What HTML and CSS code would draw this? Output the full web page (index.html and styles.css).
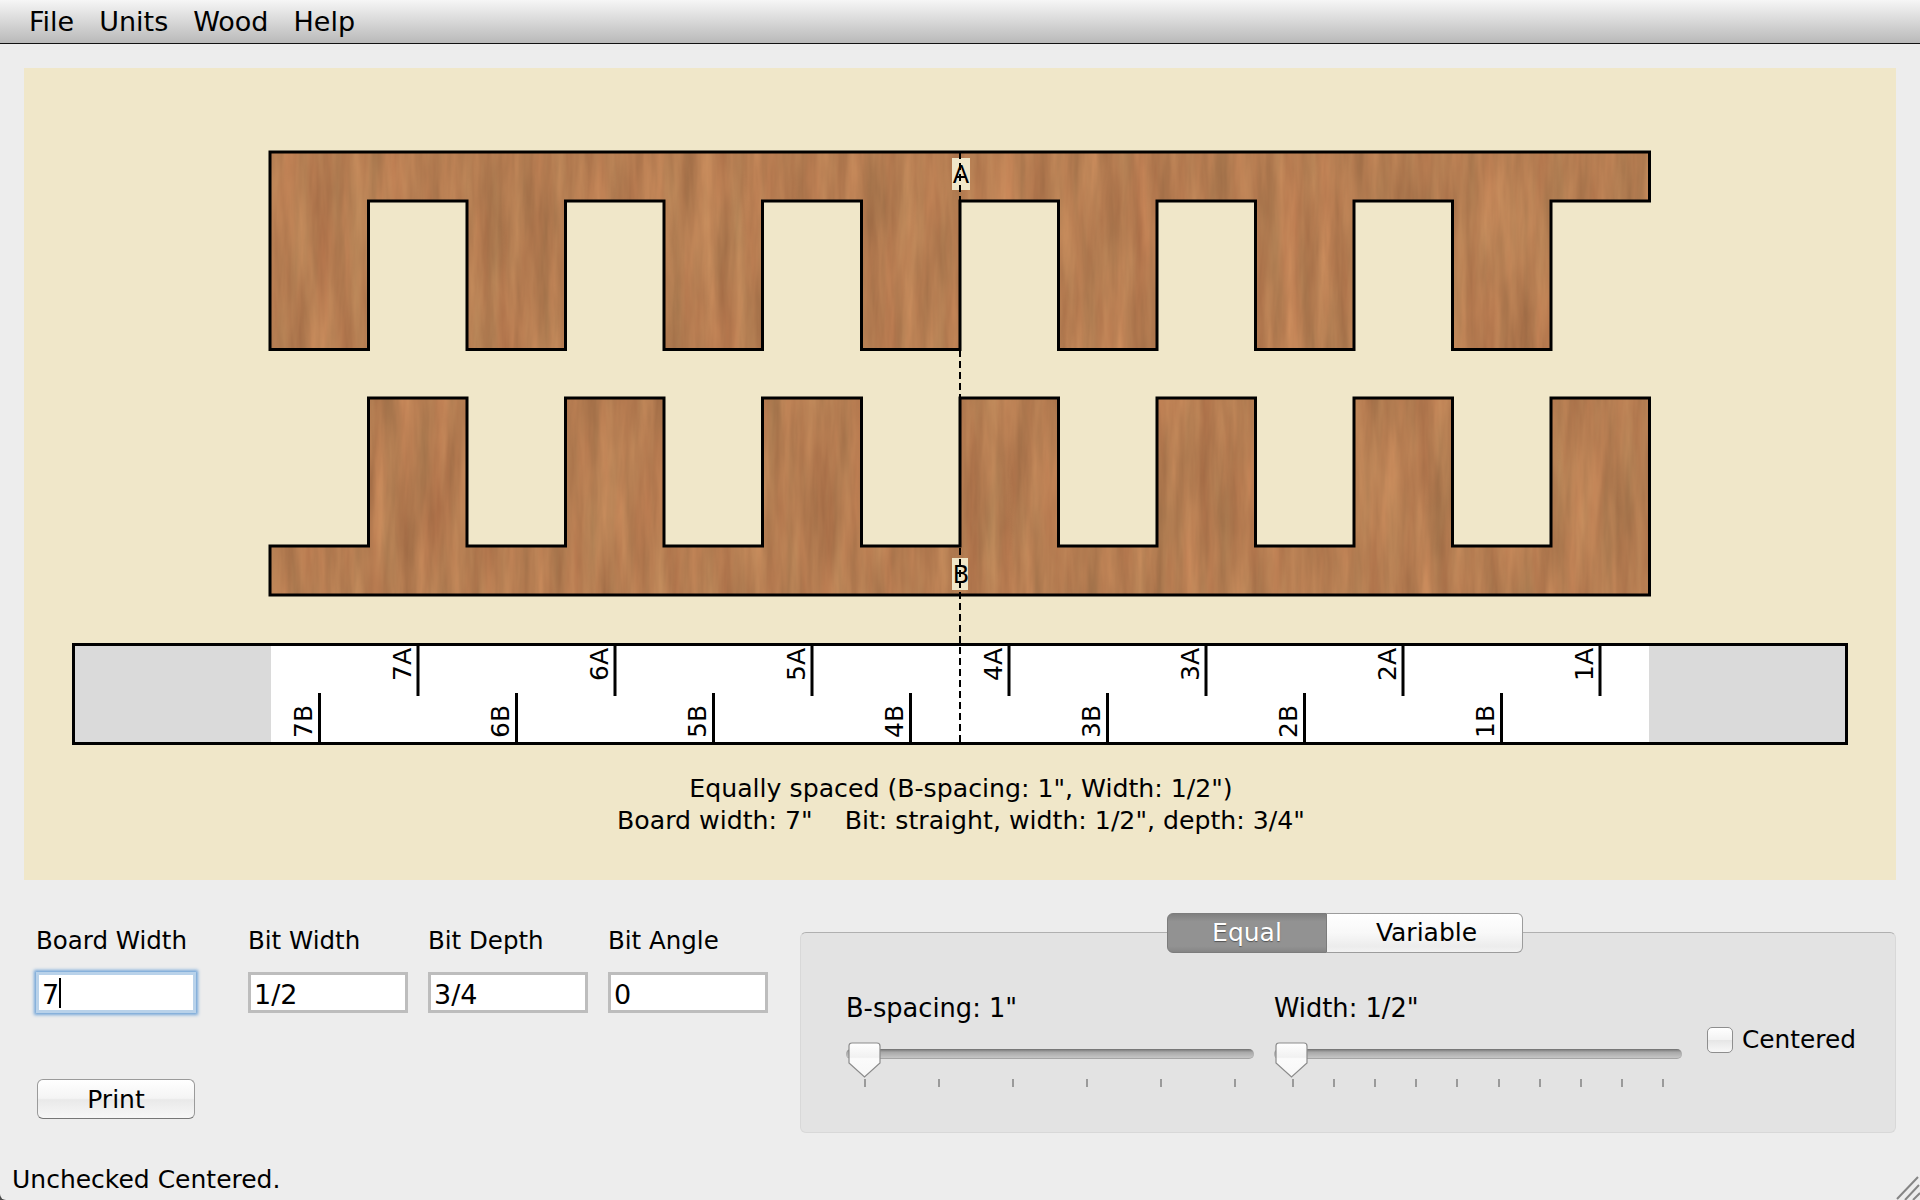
FILE: index.html
```html
<!DOCTYPE html>
<html lang="en">
<head>
  <meta charset="UTF-8" />
  <title>Router Joint</title>
  <link rel="stylesheet" href="styles.css">
</head>
<body>
<div class="app">

  <div class="menubar">
    <span class="menu-item">File</span>
    <span class="menu-item">Units</span>
    <span class="menu-item">Wood</span>
    <span class="menu-item">Help</span>
  </div>

  <div class="canvas">
    <svg class="diagram" width="1872" height="811" viewBox="24 68 1872 811">
      <defs>
        <filter id="wood" x="0" y="0" width="100%" height="100%" color-interpolation-filters="sRGB">
          <feTurbulence type="fractalNoise" baseFrequency="0.06 0.007" numOctaves="4" seed="11"/>
          <feColorMatrix type="matrix" values="0.2 0.08 0 0 0.57   0.17 0 0 0 0.405   0.12 0 0 0 0.26   0 0 0 0 1"/>
        </filter>
        <clipPath id="boardA">
          <path d="M270 152H1649.5V201H1551V349.5H1452.5V201H1354V349.5H1255.5V201H1157V349.5H1058.5V201H960V349.5H861.5V201H762.5V349.5H664V201H565.5V349.5H467V201H368.5V349.5H270Z"/>
        </clipPath>
        <clipPath id="boardB">
          <path d="M270 595H1649.5V398H1551V546H1452.5V398H1354V546H1255.5V398H1157V546H1058.5V398H960V546H861.5V398H762.5V546H664V398H565.5V546H467V398H368.5V546H270Z"/>
        </clipPath>
      </defs>

      <g clip-path="url(#boardA)"><rect class="wood" x="270" y="152" width="1380" height="198"/></g>
      <g clip-path="url(#boardB)"><rect class="wood" x="270" y="398" width="1380" height="198"/></g>
      <path class="edge" d="M270 152H1649.5V201H1551V349.5H1452.5V201H1354V349.5H1255.5V201H1157V349.5H1058.5V201H960V349.5H861.5V201H762.5V349.5H664V201H565.5V349.5H467V201H368.5V349.5H270Z"/>
      <path class="edge" d="M270 595H1649.5V398H1551V546H1452.5V398H1354V546H1255.5V398H1157V546H1058.5V398H960V546H861.5V398H762.5V546H664V398H565.5V546H467V398H368.5V546H270Z"/>

      <!-- ruler -->
      <rect class="ruler-bg" x="73.5" y="644.5" width="1773" height="99"/>
      <rect class="ruler-off" x="75" y="646" width="196" height="96"/>
      <rect class="ruler-off" x="1649" y="646" width="196" height="96"/>
      <rect class="ruler-line" x="73.5" y="644.5" width="1773" height="99"/>

      <path class="tick" d="M418 645V696M615 645V696M812 645V696M1009 645V696M1206 645V696M1403 645V696M1600 645V696"/>
      <path class="tick" d="M319.5 693V743M516.5 693V743M713.5 693V743M910.5 693V743M1107.5 693V743M1304.5 693V743M1501.5 693V743"/>

      <text class="rlabel" text-anchor="end" transform="translate(411 648) rotate(-90)">7A</text>
      <text class="rlabel" text-anchor="end" transform="translate(608 648) rotate(-90)">6A</text>
      <text class="rlabel" text-anchor="end" transform="translate(805 648) rotate(-90)">5A</text>
      <text class="rlabel" text-anchor="end" transform="translate(1002 648) rotate(-90)">4A</text>
      <text class="rlabel" text-anchor="end" transform="translate(1199 648) rotate(-90)">3A</text>
      <text class="rlabel" text-anchor="end" transform="translate(1396 648) rotate(-90)">2A</text>
      <text class="rlabel" text-anchor="end" transform="translate(1593 648) rotate(-90)">1A</text>

      <text class="rlabel" transform="translate(312 738) rotate(-90)">7B</text>
      <text class="rlabel" transform="translate(509 738) rotate(-90)">6B</text>
      <text class="rlabel" transform="translate(706 738) rotate(-90)">5B</text>
      <text class="rlabel" transform="translate(903 738) rotate(-90)">4B</text>
      <text class="rlabel" transform="translate(1100 738) rotate(-90)">3B</text>
      <text class="rlabel" transform="translate(1297 738) rotate(-90)">2B</text>
      <text class="rlabel" transform="translate(1494 738) rotate(-90)">1B</text>

      <!-- center line and A/B marks -->
      <rect class="mark" x="952" y="158" width="18" height="32"/>
      <rect class="mark" x="952" y="558" width="16" height="32"/>
      <text class="dlabel" x="961" y="183" text-anchor="middle">A</text>
      <text class="dlabel" x="961" y="583" text-anchor="middle">B</text>
      <line class="center" x1="960" y1="152" x2="960" y2="743"/>

      <text class="caption" x="961" y="797" text-anchor="middle">Equally spaced (B-spacing: 1", Width: 1/2")</text>
      <text class="caption" x="961" y="829" text-anchor="middle" xml:space="preserve">Board width: 7"    Bit: straight, width: 1/2", depth: 3/4"</text>
    </svg>
  </div>

  <div class="controls">
    <div class="left-form">
      <div class="fields">
        <div class="field field-first">
          <label class="field-label">Board Width</label>
          <div class="input-wrap">
            <input class="text-input is-focused" value="7">
            <span class="caret"></span>
          </div>
        </div>
        <div class="field">
          <label class="field-label">Bit Width</label>
          <input class="text-input" value="1/2">
        </div>
        <div class="field">
          <label class="field-label">Bit Depth</label>
          <input class="text-input" value="3/4">
        </div>
        <div class="field">
          <label class="field-label">Bit Angle</label>
          <input class="text-input" value="0">
        </div>
      </div>
      <button class="btn-print">Print</button>
    </div>

    <div class="group">
      <div class="segmented">
        <div class="seg seg-on">Equal</div>
        <div class="seg">Variable</div>
      </div>
      <div class="group-row">
        <div class="slider">
          <div class="slider-label">B-spacing: 1"</div>
          <div class="track">
            <svg class="thumb" width="33" height="36" viewBox="0 0 33 36">
              <defs>
                <linearGradient id="thumbFill" x1="0" y1="0" x2="0" y2="1">
                  <stop offset="0" stop-color="#fff"/>
                  <stop offset="0.42" stop-color="#f1f1f1"/>
                  <stop offset="0.46" stop-color="#fbfbfb"/>
                  <stop offset="1" stop-color="#f7f7f7"/>
                </linearGradient>
              </defs>
              <path d="M4 1H29Q32 1 32 4V21L16.5 35L1 21V4Q1 1 4 1Z" fill="url(#thumbFill)" stroke="#8b8b8b" stroke-width="1.2"/>
            </svg>
          </div>
          <div class="ticks">
            <span class="tk"></span><span class="tk"></span><span class="tk"></span>
            <span class="tk"></span><span class="tk"></span><span class="tk"></span>
          </div>
        </div>
        <div class="slider">
          <div class="slider-label">Width: 1/2"</div>
          <div class="track">
            <svg class="thumb thumb-2" width="33" height="36" viewBox="0 0 33 36">
              <path d="M4 1H29Q32 1 32 4V21L16.5 35L1 21V4Q1 1 4 1Z" fill="url(#thumbFill)" stroke="#8b8b8b" stroke-width="1.2"/>
            </svg>
          </div>
          <div class="ticks">
            <span class="tk"></span><span class="tk"></span><span class="tk"></span><span class="tk"></span><span class="tk"></span>
            <span class="tk"></span><span class="tk"></span><span class="tk"></span><span class="tk"></span><span class="tk"></span>
          </div>
        </div>
        <div class="check-row">
          <span class="checkbox"></span>
          <span class="check-text">Centered</span>
        </div>
      </div>
    </div>
  </div>

  <div class="status">Unchecked Centered.</div>

  <svg class="grip" width="24" height="24" viewBox="0 0 24 24">
    <path d="M1 23L22 1M9 24L23 9M17 24L24 17" stroke="#858585" stroke-width="2" fill="none"/>
  </svg>
</div>
</body>
</html>
```

FILE: styles.css
```css
html { background: #4a4a4a; }
body { margin: 0; font-family: "DejaVu Sans", sans-serif; color: #000; }
.app {
  position: relative; width: 1920px; height: 1200px; background: #ededed;
  display: flex; flex-direction: column; overflow: hidden;
  border-radius: 0 0 0 6px;
}

.menubar {
  height: 43px; flex: none; display: flex; align-items: center; gap: 25px;
  padding-left: 29px; border-bottom: 1px solid #111;
  background: linear-gradient(#f6f6f6, #e4e4e4 30%, #b9b9b9);
  font-size: 27px;
}

.canvas { flex: none; margin: 24px 24px 0; height: 812px; background: #f0e7c9; }
.diagram { display: block; }
.wood { filter: url(#wood); }
.edge { fill: none; stroke: #000; stroke-width: 3; }
.ruler-bg { fill: #fff; }
.ruler-off { fill: #dadada; }
.ruler-line { fill: none; stroke: #000; stroke-width: 3; }
.tick { fill: none; stroke: #000; stroke-width: 3; }
.rlabel { font-size: 25px; fill: #000; }
.dlabel { font-size: 24px; fill: #000; }
.mark { fill: #f0e7c9; }
.center { stroke: #000; stroke-width: 2; stroke-dasharray: 7 4; }
.caption { font-size: 25.2px; fill: #000; }

.controls { flex: 1; display: flex; justify-content: space-between; padding: 0 24px 0 36px; }
.left-form { padding-top: 46px; }
.fields { display: flex; gap: 20px; }
.field { display: flex; flex-direction: column; gap: 16px; }
.field-first { margin-right: 32px; }
.field-label { font-size: 24.5px; line-height: 30px; }
.input-wrap { position: relative; }
.text-input {
  display: block; width: 160px; height: 41px; box-sizing: border-box; padding: 3px 3px 0;
  font: 27px "DejaVu Sans", sans-serif; color: #000; background: #fff;
  border: 3px solid #bdbdbd; border-radius: 0; outline: none;
}
.is-focused { border-color: #b9d2ea; box-shadow: 0 0 3px 2px #74a6d8; }
.caret { position: absolute; left: 23px; top: 6px; width: 1.5px; height: 30px; background: #000; }

.btn-print {
  display: block; width: 158px; height: 40px; margin: 66px 0 0 1px; padding: 0;
  font: 25px "DejaVu Sans", sans-serif; color: #000;
  background: linear-gradient(#fff, #f4f4f4 48%, #e9e9e9 52%, #f7f7f7);
  border: 1px solid #9a9a9a; border-bottom-color: #777; border-radius: 6px;
}

.group {
  align-self: flex-start; margin-top: 52px; width: 1096px; height: 201px; box-sizing: border-box;
  background: #e3e3e3; border: 1px solid #d8d8d8; border-top-color: #b0b0b0; border-radius: 6px;
  display: flex; flex-direction: column;
}
.segmented { display: flex; margin: -20px 0 0 366px; height: 40px; }
.seg {
  width: 196px; box-sizing: border-box; padding-left: 4px; text-align: center; font-size: 25px; line-height: 38px;
  background: linear-gradient(#fff, #f8f8f8 50%, #ececec 85%, #f2f2f2);
  border: 1px solid #9c9c9c; border-left: none; border-radius: 0 6px 6px 0;
}
.seg-on {
  width: 160px; padding-left: 0; color: #fff; text-shadow: 0 1px 1px #555;
  background: linear-gradient(#7f7f7f, #929292 20%, #929292 85%, #858585);
  border: 1px solid #7c7c7c; border-radius: 6px 0 0 6px;
}

.group-row { display: flex; margin-top: 40px; padding-left: 45px; }
.slider { width: 408px; margin-right: 20px; }
.slider-label { font-size: 25.7px; line-height: 30px; }
.track {
  position: relative; height: 10px; margin-top: 26px; box-sizing: border-box;
  background: linear-gradient(#6f6f6f, #a8a8a8 35%, #c6c6c6);
  border-bottom: 1px solid #a5a5a5; border-radius: 5px;
}
.thumb { position: absolute; left: 2px; top: -7px; }
.thumb-2 { left: 1px; }
.ticks { display: flex; justify-content: space-between; margin-top: 20px; padding: 0 18px; }
.tk { width: 2px; height: 8px; background: #9a9a9a; }

.check-row { display: flex; align-items: center; gap: 9px; margin: 32px 0 0 5px; height: 30px; }
.checkbox {
  width: 26px; height: 26px; box-sizing: border-box; border-radius: 5px;
  background: linear-gradient(#fff, #f3f3f3 48%, #e6e6e6 52%, #f8f8f8);
  border: 1px solid #8e8e8e;
}
.check-text { font-size: 24.8px; line-height: 30px; }

.status { flex: none; padding: 0 0 5px 12px; font-size: 25px; line-height: 30px; }
.grip { position: absolute; right: 0; bottom: 0; }
```
